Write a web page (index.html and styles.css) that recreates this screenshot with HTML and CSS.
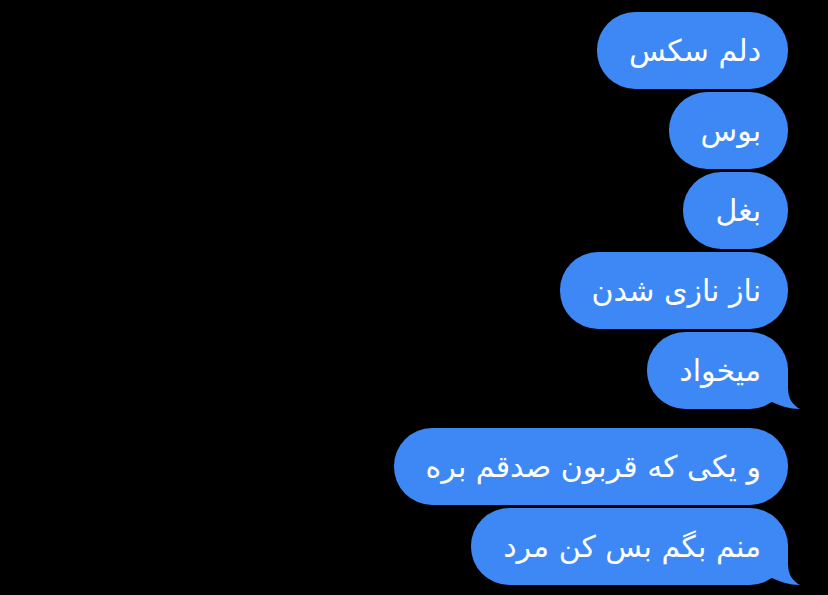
FILE: index.html
```html
<!DOCTYPE html>
<html lang="fa" dir="rtl">
<head>
    <meta charset="UTF-8">
    <meta name="viewport" content="width=device-width, initial-scale=1.0">
    <title>پیام‌ها</title>
    <link rel="stylesheet" href="styles.css">
</head>
<body>
    <div class="chat">
        <div class="bubble">دلم سکس</div>
        <div class="bubble">بوس</div>
        <div class="bubble">بغل</div>
        <div class="bubble">ناز نازی شدن</div>
        <div class="bubble tail">میخواد
            <svg class="tail-shape" width="28" height="41" viewBox="0 0 28 41"><path d="M0 34 C9 38 17 41 28 41 C21 37 16 31 16 20 V0 H0 Z"/></svg>
        </div>
        <div class="bubble">و یکی که قربون صدقم بره</div>
        <div class="bubble tail">منم بگم بس کن مرد
            <svg class="tail-shape" width="28" height="41" viewBox="0 0 28 41"><path d="M0 34 C9 38 17 41 28 41 C21 37 16 31 16 20 V0 H0 Z"/></svg>
        </div>
    </div>
</body>
</html>
```

FILE: styles.css
```css
html, body {
    margin: 0;
    background-color: #000;
}
body {
    font-family: "DejaVu Sans", sans-serif;
    width: 828px;
    height: 595px;
    overflow: hidden;
}
.chat {
    display: flex;
    flex-direction: column;
    align-items: flex-start; /* rtl: start = right side */
    gap: 3px;
    padding: 12px 40px 0 0;
}
.bubble {
    position: relative;
    height: 77px;
    line-height: 77px;
    padding: 0 27px 0 32px;
    border-radius: 38px;
    background-color: #3e88f6;
    color: #fff;
    font-size: 30px;
    white-space: nowrap;
}
.tail {
    margin-bottom: 16px;
}
.tail-shape {
    position: absolute;
    right: -12px;
    bottom: 0;
    fill: #3e88f6;
}
```
